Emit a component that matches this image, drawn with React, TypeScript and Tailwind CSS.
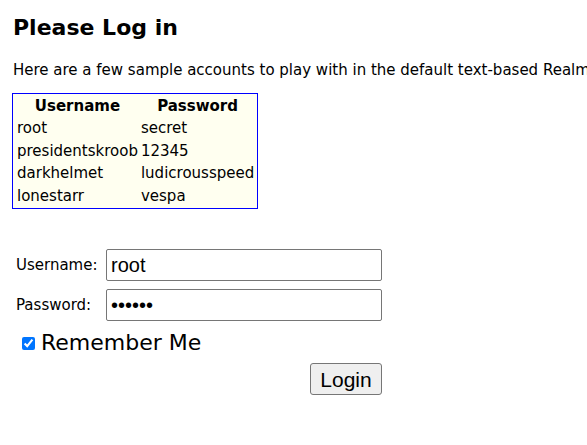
import React from 'react';

const accounts = [
  { user: 'root', pass: 'secret' },
  { user: 'presidentskroob', pass: '12345' },
  { user: 'darkhelmet', pass: 'ludicrousspeed' },
  { user: 'lonestarr', pass: 'vespa' },
];

export default function App() {
  return (
    <div className="min-h-[445px] w-[587px] overflow-hidden bg-white px-[13px] pt-[14px] text-black font-['DejaVu_Sans',Verdana,sans-serif] text-[15px]">
      <h2 className="text-[22px] font-bold leading-[28px]">Please Log in</h2>
      <p className="mt-[19px] whitespace-nowrap leading-[18px]">
        Here are a few sample accounts to play with in the default text-based Realm
      </p>

      {/* sample accounts */}
      <table className="mt-[14px] ml-[-1px] border-separate border-spacing-[2px] border border-[#0000ff] bg-[#fffff0] leading-[18.4px]">
        <thead>
          <tr>
            <th className="pl-[2px] py-px font-bold">Username</th>
            <th className="px-[1px] py-px font-bold">Password</th>
          </tr>
        </thead>
        <tbody>
          {accounts.map((a) => (
            <tr key={a.user}>
              <td className="pl-[2px] py-px">{a.user}</td>
              <td className="px-[1px] py-px">{a.pass}</td>
            </tr>
          ))}
        </tbody>
      </table>

      <form className="mt-[40px] ml-[3px]" onSubmit={(e) => e.preventDefault()}>
        <div className="flex items-center gap-[8px]">
          <label className="w-[82px]">Username:</label>
          <input
            defaultValue="root"
            className="h-[32px] w-[276px] rounded-[2px] border border-[#767676] px-[4px] text-[20px] font-['Liberation_Sans',Arial,sans-serif]"
          />
        </div>
        <div className="mt-[8px] flex items-center gap-[8px]">
          <label className="w-[82px]">Password:</label>
          <input
            type="password"
            defaultValue="secret"
            className="h-[32px] w-[276px] rounded-[2px] border border-[#767676] px-[4px] text-[20px] font-['Liberation_Sans',Arial,sans-serif]"
          />
        </div>
        <label className="mt-[9px] ml-[6px] flex items-center gap-[6px] text-[22px] leading-[26px]">
          <input type="checkbox" defaultChecked className="h-[13px] w-[13px] accent-[#0075ff]" />
          Remember Me
        </label>
        <div className="mt-[7px] flex w-[366px] justify-end">
          <button className="h-[32px] w-[72px] rounded-[3px] border border-[#767676] bg-[#efefef] text-[21px] font-['Liberation_Sans',Arial,sans-serif]">
            Login
          </button>
        </div>
      </form>
    </div>
  );
}
